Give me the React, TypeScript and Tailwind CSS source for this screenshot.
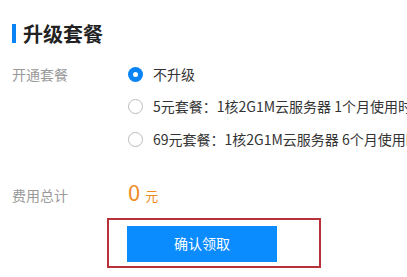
import { useState } from "react";

const plans = [
  { id: "none", label: "不升级" },
  { id: "p5", label: "5元套餐：1核2G1M云服务器 1个月使用时长" },
  { id: "p69", label: "69元套餐：1核2G1M云服务器 6个月使用时长" },
];

export default function App() {
  const [selected, setSelected] = useState("none");

  return (
    <div className="h-[277px] w-[407px] overflow-hidden bg-white font-['Noto_Sans_CJK_SC','Microsoft_YaHei',sans-serif] text-[14px] text-[#333]">
      <div className="flex items-center pl-3 pt-6">
        <span className="h-[19px] w-1 bg-[#0a84f5]" />
        <h2 className="ml-[7px] text-[20px] font-bold leading-[19px] text-[#222]">升级套餐</h2>
      </div>

      <div className="mt-[15px] flex">
        <div className="w-[128px] shrink-0 pl-3 leading-[32.5px] text-[#999]">开通套餐</div>
        <div className="flex min-w-0 flex-col">
          {plans.map((p) => (
            <label key={p.id} className="flex h-[32.5px] cursor-pointer items-center whitespace-nowrap" onClick={() => setSelected(p.id)}>
              {selected === p.id ? (
                <span className="flex h-[15px] w-[15px] shrink-0 items-center justify-center rounded-full bg-[#0a84f5]">
                  <span className="h-[5px] w-[5px] rounded-full bg-white" />
                </span>
              ) : (
                <span className="h-[15px] w-[15px] shrink-0 rounded-full border border-[#bbb] bg-white" />
              )}
              <span className="ml-[10px]">{p.label}</span>
            </label>
          ))}
        </div>
      </div>

      <div className="mt-[19px] flex h-8 items-baseline">
        <div className="w-[128px] shrink-0 pl-3 leading-8 text-[#999]">费用总计</div>
        <span className="text-[22px] leading-8 text-[#f08a24]">0</span>
        <span className="ml-[5px] text-[13px] text-[#f08a24]">元</span>
      </div>

      <div className="ml-[107px] mt-[11px] h-[50px] w-[214px] border-2 border-[#b8323c] pl-[18px] pt-[6px]">
        <button className="h-9 w-[150px] bg-[#0a8cff] text-[14px] text-white">确认领取</button>
      </div>
    </div>
  );
}
